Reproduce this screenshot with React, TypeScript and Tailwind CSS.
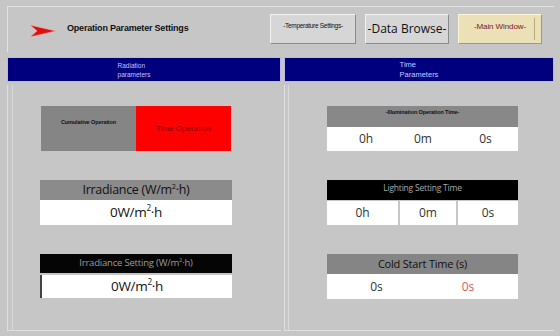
const sans = "font-['Open_Sans','Noto_Sans',sans-serif]";

function Arrow() {
  return (
    <svg width="28" height="14" viewBox="0 0 28 14" className="shrink-0">
      <path d="M1 1 L27 7 L1 13 L8 7 Z" fill="#e01010" stroke="#f7b0b0" strokeWidth="0.6" />
    </svg>
  );
}

function ValueBox({ children, className = "" }: { children: React.ReactNode; className?: string }) {
  return <div className={`bg-white flex items-center ${className}`}>{children}</div>;
}

function Sup() {
  return (
    <>
      m<sup className="text-[0.6em] -top-[0.55em]">2</sup>·h
    </>
  );
}

export default function App() {
  return (
    <div className={`w-[560px] h-[336px] bg-[#c6c6c6] pl-[7px] pr-[6px] pt-[6px] overflow-hidden ${sans}`}>
      {/* header */}
      <div className="h-[46px] border-l border-t border-[#e2e2e2] flex items-center">
        <div className="ml-[21px] mt-[2px]">
          <Arrow />
        </div>
        <div className="ml-[10px] -mt-[2px] text-[9px] font-bold text-[#111] font-['Liberation_Sans',sans-serif] tracking-[-0.2px]">
          Operation Parameter Settings
        </div>
        <div className="ml-auto mr-[12px] flex gap-[9px] -mt-[2px]">
          <button className="w-[86px] h-[30px] bg-[#d6d6d6] border border-t-[#f2f2f2] border-l-[#f2f2f2] border-b-[#8a8a8a] border-r-[#8a8a8a] text-[6.5px] font-['Liberation_Sans',sans-serif] text-[#111] flex items-start justify-center pt-[6px] tracking-[-0.3px] whitespace-nowrap">
            -Temperature Settings-
          </button>
          <button className="w-[84px] h-[30px] bg-[#d6d6d6] border border-t-[#f2f2f2] border-l-[#f2f2f2] border-b-[#8a8a8a] border-r-[#8a8a8a] text-[12px] text-[#111] flex items-center justify-center whitespace-nowrap">
            -Data Browse-
          </button>
          <button className="w-[84px] h-[30px] bg-[#ece1b6] border border-t-[#fbf5dc] border-l-[#fbf5dc] border-b-[#a49a72] border-r-[#a49a72] text-[8px] font-['Liberation_Sans',sans-serif] text-[#7a1818] flex items-start justify-center pt-[6px] relative tracking-[-0.1px] whitespace-nowrap">
            -Main Window-
            <span className="absolute right-[6px] top-[3px] bottom-[3px] w-px bg-[#b6aa7e]" />
          </button>
        </div>
      </div>

      {/* section bars */}
      <div className="mt-[5px] flex gap-[3px]">
        <div className="w-[274px] h-[25px] bg-[#00007e] border border-[#b8b8e8] flex items-center justify-center pr-[20px]">
          <div className="flex flex-col text-[6.5px] leading-[9px] text-[#c0c0ff] font-['Liberation_Sans',sans-serif]">
            <span>Radiation</span>
            <span>parameters</span>
          </div>
        </div>
        <div className="flex-1 h-[25px] bg-[#00007e] border border-[#b8b8e8] flex items-center justify-center">
          <div className="flex flex-col text-[7.5px] leading-[10px] text-[#c8c8ff] font-['Liberation_Sans',sans-serif]">
            <span>Time</span>
            <span>Parameters</span>
          </div>
        </div>
      </div>

      {/* panels */}
      <div className="mt-[3px] flex gap-[3px] h-[246px]">
        {/* left */}
        <div className="w-[274px] border-l border-b border-[#e0e0e0] pl-[4px] flex">
          <div className="flex-1 border-l border-[#dadada] pl-[28px] pt-[21px]">
            <div className="flex w-[190px] h-[45px]">
              <div className="w-[95px] bg-[#858585] flex items-start justify-center pt-[12px] text-[5.5px] font-bold text-[#111] font-['Liberation_Sans',sans-serif] tracking-[-0.1px]">
                Cumulative Operation
              </div>
              <div className="flex-1 bg-[#fd0000] flex items-center justify-center text-[8px] text-[#8c0000] font-['Liberation_Sans',sans-serif]">
                Time Operation
              </div>
            </div>

            <div className="mt-[29px] w-[192px] -ml-[1px]">
              <div className="h-[20px] bg-[#8b8b8b] flex items-center justify-center text-[12.5px] text-[#111] tracking-[-0.3px]">
                Irradiance (W/<Sup />)
              </div>
              <ValueBox className="h-[25px] justify-center text-[13.5px] text-[#111] tracking-[-0.3px]">
                0W/<Sup />
              </ValueBox>
            </div>

            <div className="mt-[29px] w-[192px] -ml-[1px]">
              <div className="h-[19px] bg-[#050505] flex items-center justify-center text-[9.5px] text-[#9a9a9a] tracking-[-0.2px]">
                Irradiance Setting (W/<Sup />)
              </div>
              <ValueBox className="mt-[2px] h-[23px] justify-center text-[13.5px] text-[#111] border-l-2 border-[#444] tracking-[-0.3px]">
                0W/<Sup />
              </ValueBox>
            </div>
          </div>
        </div>

        {/* right */}
        <div className="flex-1 border-l border-b border-[#e0e0e0] pl-[3px] flex">
          <div className="flex-1 border-l border-[#dadada] pl-[38px] pt-[21px]">
            <div className="w-[191px]">
              <div className="h-[21px] bg-[#888888] flex items-start justify-center pt-[2px] text-[5.5px] font-bold text-[#111] font-['Liberation_Sans',sans-serif] tracking-[-0.1px]">
                -Illumination Operation Time-
              </div>
              <ValueBox className="h-[24px] text-[12px] text-[#333]">
                <span className="w-[64px] text-center pl-[14px]">0h</span>
                <span className="w-[64px] text-center">0m</span>
                <span className="flex-1 text-center pr-[2px]">0s</span>
              </ValueBox>
            </div>

            <div className="mt-[29px] w-[191px]">
              <div className="h-[20px] bg-black flex items-start justify-center pt-[2px] text-[8.5px] text-[#a8a8a8] tracking-[-0.2px]">
                Lighting Setting Time
              </div>
              <div className="mt-[1px] flex gap-[2px] h-[24px] text-[12px] text-[#333]">
                <ValueBox className="w-[71px] justify-center">0h</ValueBox>
                <ValueBox className="w-[56px] justify-center">0m</ValueBox>
                <ValueBox className="flex-1 justify-center">0s</ValueBox>
              </div>
            </div>

            <div className="mt-[29px] w-[191px]">
              <div className="h-[20px] bg-[#858585] flex items-center justify-center text-[11px] text-[#111] tracking-[-0.2px]">
                Cold Start Time (s)
              </div>
              <ValueBox className="h-[25px] text-[12px]">
                <span className="w-[95px] text-center pl-[4px] text-[#333]">0s</span>
                <span className="flex-1 text-center pr-[4px] text-[#cf5c5c]">0s</span>
              </ValueBox>
            </div>
          </div>
        </div>
      </div>
    </div>
  );
}
